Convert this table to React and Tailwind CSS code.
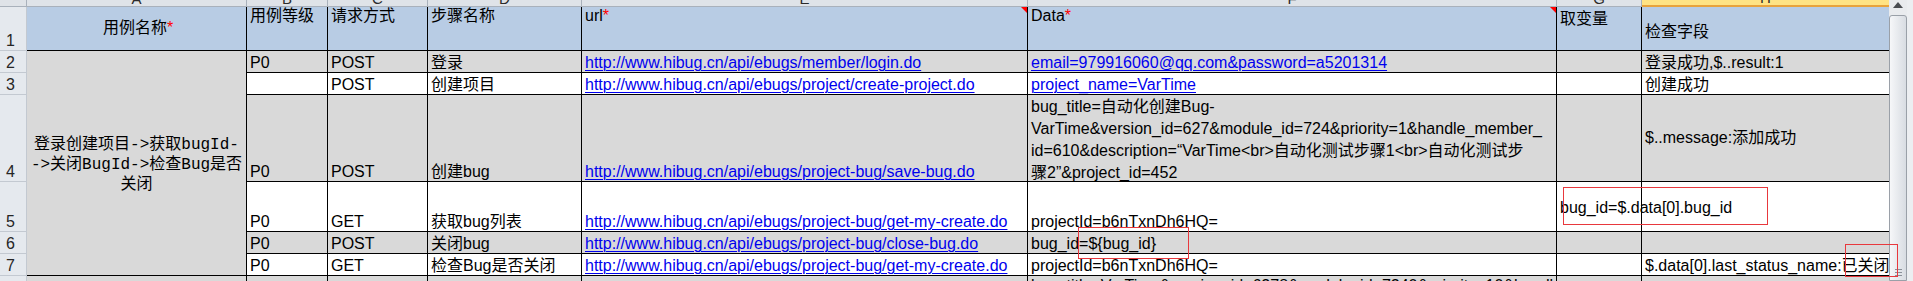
import React from "react";

const GREY = "bg-[#d9d9d9]";
const WHITE = "bg-white";
const BLUE = "bg-[#b8cce4]";

const Cell = ({ bg = "", align = "items-end", className = "", children }) => (
  <div
    className={`relative flex overflow-hidden whitespace-nowrap border-r border-b border-black pl-[3px] leading-[18px] ${align} ${bg} ${className}`}
  >
    {children}
  </div>
);

const Link = ({ children }) => (
  <span className="text-[#0000ee] underline decoration-1 underline-offset-[2px]">{children}</span>
);

const Star = () => <span className="text-[#ff0000]">*</span>;

const Flag = () => (
  <svg className="absolute right-0 top-0" width="6" height="6" viewBox="0 0 6 6">
    <polygon points="0,0 6,0 6,6" fill="#ff0000" />
  </svg>
);

const colLetters = [
  { l: "A", w: "w-[220px]" },
  { l: "B", w: "w-[81px]" },
  { l: "C", w: "w-[100px]" },
  { l: "D", w: "w-[154px]" },
  { l: "E", w: "w-[446px]" },
  { l: "F", w: "w-[529px]" },
  { l: "G", w: "w-[85px]" },
];

const rowHeads = [
  { n: 1, h: "h-[44px]" },
  { n: 2, h: "h-[22px]" },
  { n: 3, h: "h-[22px]" },
  { n: 4, h: "h-[87px]" },
  { n: 5, h: "h-[50px]" },
  { n: 6, h: "h-[22px]" },
  { n: 7, h: "h-[22px]" },
  { n: 8, h: "h-[30px]" },
];

const ColumnBand = () => (
  <div className="flex h-[7px] shrink-0">
    <div className="w-[27px] shrink-0 border-r border-b border-[#a9b1bb] bg-[#dfe3e8]" />
    {colLetters.map((c) => (
      <div
        key={c.l}
        className={`${c.w} shrink-0 flex items-end justify-center overflow-hidden border-r border-b border-[#a9b1bb] bg-[#dfe3e8] text-[15px] leading-none text-[#2b2b2b]`}
      >
        {c.l}
      </div>
    ))}
    <div className="w-[247px] shrink-0 flex items-end justify-center overflow-hidden border-b-2 border-[#e8a33c] bg-[#ffe384] text-[15px] leading-none text-[#2b2b2b]">
      H
    </div>
  </div>
);

const RowHeaders = () => (
  <div className="flex w-[27px] shrink-0 flex-col">
    {rowHeads.map((r) => (
      <div
        key={r.n}
        className={`${r.h} shrink-0 flex items-end border-r border-b border-[#c3c9d1] bg-[#e5e9ee] pl-[6px] text-[16px] leading-[18px] text-[#262626]`}
      >
        {r.n}
      </div>
    ))}
  </div>
);

const Sheet = () => (
  <div className="grid grid-cols-[220px_81px_100px_154px_446px_529px_85px_247px] grid-rows-[44px_22px_22px_87px_50px_22px_22px_30px] overflow-hidden">
    {/* row 1 */}
    <Cell bg={BLUE} align="items-center justify-center pb-[2px]">
      用例名称<Star />
    </Cell>
    <Cell bg={BLUE} align="items-start">用例等级</Cell>
    <Cell bg={BLUE} align="items-start">请求方式</Cell>
    <Cell bg={BLUE} align="items-start">步骤名称</Cell>
    <Cell bg={BLUE} align="items-start">
      url<Star />
      <Flag />
    </Cell>
    <Cell bg={BLUE} align="items-start">
      Data<Star />
      <Flag />
    </Cell>
    <Cell bg={BLUE} align="items-start pt-[3px]">取变量</Cell>
    <Cell bg={BLUE} align="items-center pt-[6px]" className="border-r-0">检查字段</Cell>

    {/* row 2 + merged A */}
    <div className="row-span-6 flex flex-col items-center justify-center overflow-hidden border-r border-b border-black bg-[#d9d9d9] pt-[4px] font-['Liberation_Mono','Noto_Sans_CJK_SC',monospace] text-[16px] leading-[20px]">
      <div className="whitespace-nowrap">登录创建项目-&gt;获取bugId-</div>
      <div className="whitespace-nowrap">-&gt;关闭BugId-&gt;检查Bug是否</div>
      <div className="whitespace-nowrap">关闭</div>
    </div>
    <Cell bg={GREY}>P0</Cell>
    <Cell bg={GREY}>POST</Cell>
    <Cell bg={GREY}>登录</Cell>
    <Cell bg={GREY}><Link>http://www.hibug.cn/api/ebugs/member/login.do</Link></Cell>
    <Cell bg={GREY}><Link>email=979916060@qq.com&amp;password=a5201314</Link></Cell>
    <Cell bg={GREY} />
    <Cell bg={GREY} className="border-r-0">登录成功,$..result:1</Cell>

    {/* row 3 */}
    <Cell bg={WHITE} />
    <Cell bg={WHITE}>POST</Cell>
    <Cell bg={WHITE}>创建项目</Cell>
    <Cell bg={WHITE}><Link>http://www.hibug.cn/api/ebugs/project/create-project.do</Link></Cell>
    <Cell bg={WHITE}><Link>project_name=VarTime</Link></Cell>
    <Cell bg={WHITE} />
    <Cell bg={WHITE} className="border-r-0">创建成功</Cell>

    {/* row 4 */}
    <Cell bg={GREY}>P0</Cell>
    <Cell bg={GREY}>POST</Cell>
    <Cell bg={GREY}>创建bug</Cell>
    <Cell bg={GREY}><Link>http://www.hibug.cn/api/ebugs/project-bug/save-bug.do</Link></Cell>
    <Cell bg={GREY} align="flex-col items-start" className="leading-[22px] pt-[1px]">
      <div>bug_title=自动化创建Bug-</div>
      <div>VarTime&amp;version_id=627&amp;module_id=724&amp;priority=1&amp;handle_member_</div>
      <div>id=610&amp;description=“VarTime&lt;br&gt;自动化测试步骤1&lt;br&gt;自动化测试步</div>
      <div>骤2”&amp;project_id=452</div>
    </Cell>
    <Cell bg={GREY} />
    <Cell bg={GREY} align="items-center" className="border-r-0">$..message:添加成功</Cell>

    {/* row 5 */}
    <Cell bg={WHITE}>P0</Cell>
    <Cell bg={WHITE}>GET</Cell>
    <Cell bg={WHITE}>获取bug列表</Cell>
    <Cell bg={WHITE}><Link>http://www.hibug.cn/api/ebugs/project-bug/get-my-create.do</Link></Cell>
    <Cell bg={WHITE}>projectId=b6nTxnDh6HQ=</Cell>
    <Cell bg={WHITE} align="items-center pt-[2px]" className="overflow-visible">
      <span className="relative z-10">bug_id=$.data[0].bug_id</span>
    </Cell>
    <Cell bg={WHITE} className="border-r-0" />

    {/* row 6 */}
    <Cell bg={GREY}>P0</Cell>
    <Cell bg={GREY}>POST</Cell>
    <Cell bg={GREY}>关闭bug</Cell>
    <Cell bg={GREY}><Link>http://www.hibug.cn/api/ebugs/project-bug/close-bug.do</Link></Cell>
    <Cell bg={GREY}>bug_id=${"{bug_id}"}</Cell>
    <Cell bg={GREY} />
    <Cell bg={GREY} className="border-r-0" />

    {/* row 7 */}
    <Cell bg={WHITE}>P0</Cell>
    <Cell bg={WHITE}>GET</Cell>
    <Cell bg={WHITE}>检查Bug是否关闭</Cell>
    <Cell bg={WHITE}><Link>http://www.hibug.cn/api/ebugs/project-bug/get-my-create.do</Link></Cell>
    <Cell bg={WHITE}>projectId=b6nTxnDh6HQ=</Cell>
    <Cell bg={WHITE} />
    <Cell bg={WHITE} className="border-r-0">$.data[0].last_status_name:已关闭</Cell>

    {/* row 8 */}
    <Cell bg={GREY} className="border-b-0" />
    <Cell bg={GREY} className="border-b-0" />
    <Cell bg={GREY} className="border-b-0" />
    <Cell bg={GREY} className="border-b-0" />
    <Cell bg={GREY} className="border-b-0" />
    <Cell bg={GREY} align="items-start" className="border-b-0 pt-[1px]">
      bug_title=VarTime&amp;version_id=6278&amp;module_id=7240&amp;priority=10&amp;handle_member_id=610
    </Cell>
    <Cell bg={GREY} className="border-b-0" />
    <Cell bg={GREY} className="border-b-0 border-r-0" />
  </div>
);

const Scrollbar = () => (
  <div className="flex w-[24px] shrink-0">
    <div className="flex w-[18px] flex-col items-center bg-[#e9ebee]">
      <svg className="mt-[2px] shrink-0" width="10" height="6" viewBox="0 0 10 6">
        <polygon points="5,0 10,6 0,6" fill="#4a4d52" />
      </svg>
      <div className="mt-[7px] flex w-[18px] flex-1 flex-col items-center justify-end rounded-t-[3px] border border-[#9aa0a8] bg-gradient-to-r from-[#f6f7f9] to-[#d8dce2] pb-[4px]">
        <div className="flex flex-col gap-[2px]">
          <div className="h-px w-[7px] bg-[#8a9099]" />
          <div className="h-px w-[7px] bg-[#8a9099]" />
          <div className="h-px w-[7px] bg-[#8a9099]" />
        </div>
      </div>
    </div>
    <div className="w-[6px] bg-[#eceef1]" />
  </div>
);

export default function App() {
  return (
    <div className="relative flex h-[281px] w-[1913px] overflow-hidden bg-white font-['Liberation_Sans','Noto_Sans_CJK_SC',sans-serif] text-[16px] text-black">
      <div className="flex w-[1889px] shrink-0 flex-col overflow-hidden">
        <ColumnBand />
        <div className="flex">
          <RowHeaders />
          <Sheet />
        </div>
      </div>
      <Scrollbar />

      {/* red annotation boxes */}
      <div className="absolute left-[1078px] top-[227px] z-20 h-[32px] w-[111px] border border-[#e8383d]" />
      <div className="absolute left-[1563px] top-[187px] z-20 h-[38px] w-[205px] border border-[#e8383d]" />
      <div className="absolute left-[1845px] top-[244px] z-20 h-[33px] w-[53px] border border-[#e8383d]" />
    </div>
  );
}
